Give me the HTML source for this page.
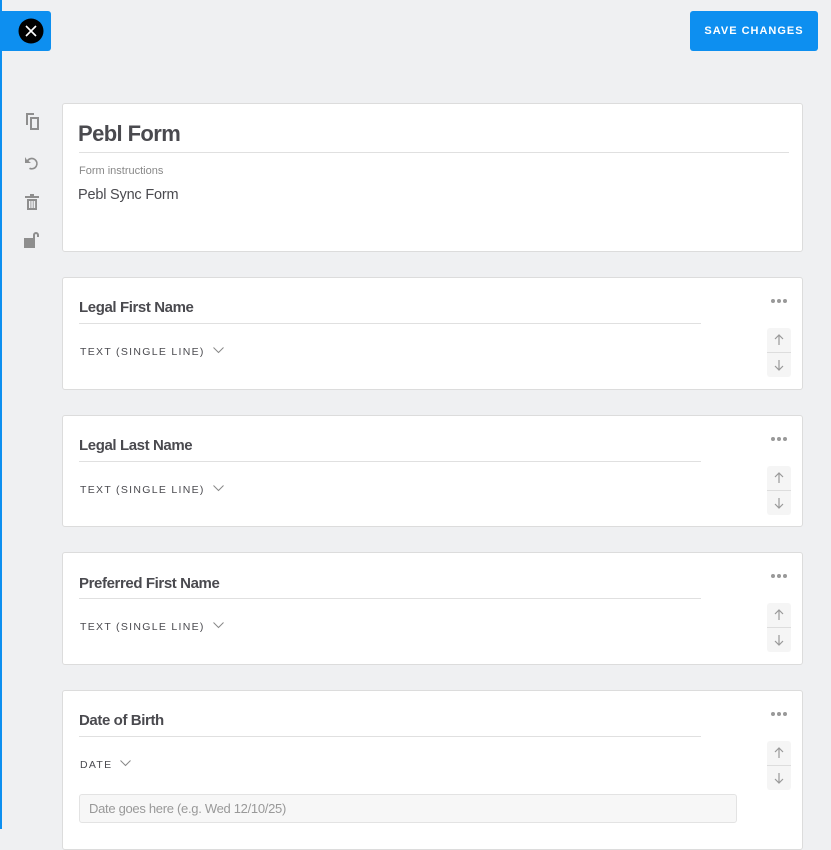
<!DOCTYPE html>
<html><head><style>
*{margin:0;padding:0;box-sizing:border-box}
body{width:831px;height:829px;overflow:hidden;background:#eff0f2;font-family:"Liberation Sans",sans-serif;position:relative}
.a{position:absolute}
.card{position:absolute;left:62px;width:741px;background:#fff;border:1px solid #dcdcdc;border-radius:3px}
.t{position:absolute;left:16px;font-weight:bold;font-size:15px;color:#4a4a4f;letter-spacing:-0.4px}
.ul{position:absolute;left:16px;width:622px;height:1px;background:#e0e0e0}
.ty{position:absolute;left:17px;font-size:10.5px;color:#4a4a4f;letter-spacing:1.3px}
.ty svg{margin-left:8px;vertical-align:1px}
.dots{position:absolute;left:708px;font-size:0}
.dots i{display:inline-block;width:4px;height:4px;border-radius:50%;background:#999;margin-right:2px}
.mv{position:absolute;left:704px;width:24px;height:49px;background:#f5f5f5;border-radius:3px}
.mv:after{content:"";position:absolute;left:0;right:0;top:24px;height:1px;background:#ddd}
</style></head><body>
<div class="a" style="left:0;top:0;width:2px;height:829px;background:#0d8ff0"></div>
<div class="a" style="left:0;top:11px;width:51px;height:40px;background:#0d8ff0;border-radius:0 3px 3px 0"></div>
<svg class="a" style="left:18px;top:18px" width="26" height="26"><circle cx="13" cy="13" r="12.5" fill="#000"/><path d="M8 8L18 18M18 8L8 18" stroke="#fff" stroke-width="1.6"/></svg>
<div class="a" style="left:690px;top:11px;width:128px;height:40px;background:#0d8ff0;border-radius:3px;color:#fff;font-weight:bold;font-size:11px;letter-spacing:1px;text-align:center;line-height:41px">SAVE CHANGES</div>
<svg class="a" style="left:22px;top:110px" width="20" height="140" fill="#8e8e8e">
<path d="M4 3h8v2H6v10H4zM8 7h9v13H8zM10 9v9h5V9z"/>
<path d="M5 50a6 6 0 1 1 2 9l1-1.5a4.3 4.3 0 1 0-1.5-6.5L9 53H3v-6z"/>
<path d="M3 86h14v2H3zM8 84h4v2H8zM5 89h10v11H5zM7 91v7h1.5v-7zM9.3 91v7h1.5v-7zM11.6 91v7h1.5v-7z"/>
<path d="M2 128h11v10H2zM11 128v-3a3 3 0 0 1 6 0v2h-2v-2a1 1 0 0 0-2 0v3z"/>
</svg>
<div class="card" style="top:103px;height:149px">
<div class="a" style="left:15px;top:17px;font-size:22px;font-weight:bold;color:#4a4a4f;letter-spacing:-0.6px">Pebl Form</div>
<div class="ul" style="top:48px;width:710px"></div>
<div class="a" style="left:16px;top:61px;font-size:11px;color:#888">Form instructions</div>
<div class="a" style="left:15px;top:83px;font-size:14.5px;color:#4a4a4f;letter-spacing:-0.2px">Pebl Sync Form</div>
</div>

<div class="card" style="top:277px;height:113px">
<div class="t" style="top:21px">Legal First Name</div><div class="ul" style="top:45px"></div>
<div class="ty" style="top:68px">TEXT (SINGLE LINE)<svg width="11" height="7"><path d="M0.5 0.5L5.5 5.5L10.5 0.5" fill="none" stroke="#888"/></svg></div>
<div class="dots" style="top:21px"><i></i><i></i><i></i></div>
<div class="mv" style="top:50px"></div>
<svg class="a" style="left:704px;top:50px" width="24" height="49" stroke="#999" fill="none" stroke-width="1.2"><path d="M12 7v10M8 11l4-4 4 4M12 32v10M8 38l4 4 4-4"/></svg>
</div>

<div class="card" style="top:415px;height:112px">
<div class="t" style="top:21px">Legal Last Name</div><div class="ul" style="top:45px"></div>
<div class="ty" style="top:68px">TEXT (SINGLE LINE)<svg width="11" height="7"><path d="M0.5 0.5L5.5 5.5L10.5 0.5" fill="none" stroke="#888"/></svg></div>
<div class="dots" style="top:21px"><i></i><i></i><i></i></div>
<div class="mv" style="top:50px"></div>
<svg class="a" style="left:704px;top:50px" width="24" height="49" stroke="#999" fill="none" stroke-width="1.2"><path d="M12 7v10M8 11l4-4 4 4M12 32v10M8 38l4 4 4-4"/></svg>
</div>

<div class="card" style="top:552px;height:113px">
<div class="t" style="top:22px">Preferred First Name</div><div class="ul" style="top:45px"></div>
<div class="ty" style="top:68px">TEXT (SINGLE LINE)<svg width="11" height="7"><path d="M0.5 0.5L5.5 5.5L10.5 0.5" fill="none" stroke="#888"/></svg></div>
<div class="dots" style="top:21px"><i></i><i></i><i></i></div>
<div class="mv" style="top:50px"></div>
<svg class="a" style="left:704px;top:50px" width="24" height="49" stroke="#999" fill="none" stroke-width="1.2"><path d="M12 7v10M8 11l4-4 4 4M12 32v10M8 38l4 4 4-4"/></svg>
</div>

<div class="card" style="top:690px;height:160px">
<div class="t" style="top:21px">Date of Birth</div><div class="ul" style="top:45px"></div>
<div class="ty" style="top:68px">DATE<svg width="11" height="7"><path d="M0.5 0.5L5.5 5.5L10.5 0.5" fill="none" stroke="#888"/></svg></div>
<div class="dots" style="top:21px"><i></i><i></i><i></i></div>
<div class="mv" style="top:50px"></div>
<svg class="a" style="left:704px;top:50px" width="24" height="49" stroke="#999" fill="none" stroke-width="1.2"><path d="M12 7v10M8 11l4-4 4 4M12 32v10M8 38l4 4 4-4"/></svg>
<div class="a" style="left:16px;top:103px;width:658px;height:29px;background:#f7f7f7;border:1px solid #e3e3e3;border-radius:3px;font-size:13px;color:#999;padding:6px 0 0 9px;letter-spacing:-0.3px">Date goes here (e.g. Wed 12/10/25)</div>
</div>
</body></html>
